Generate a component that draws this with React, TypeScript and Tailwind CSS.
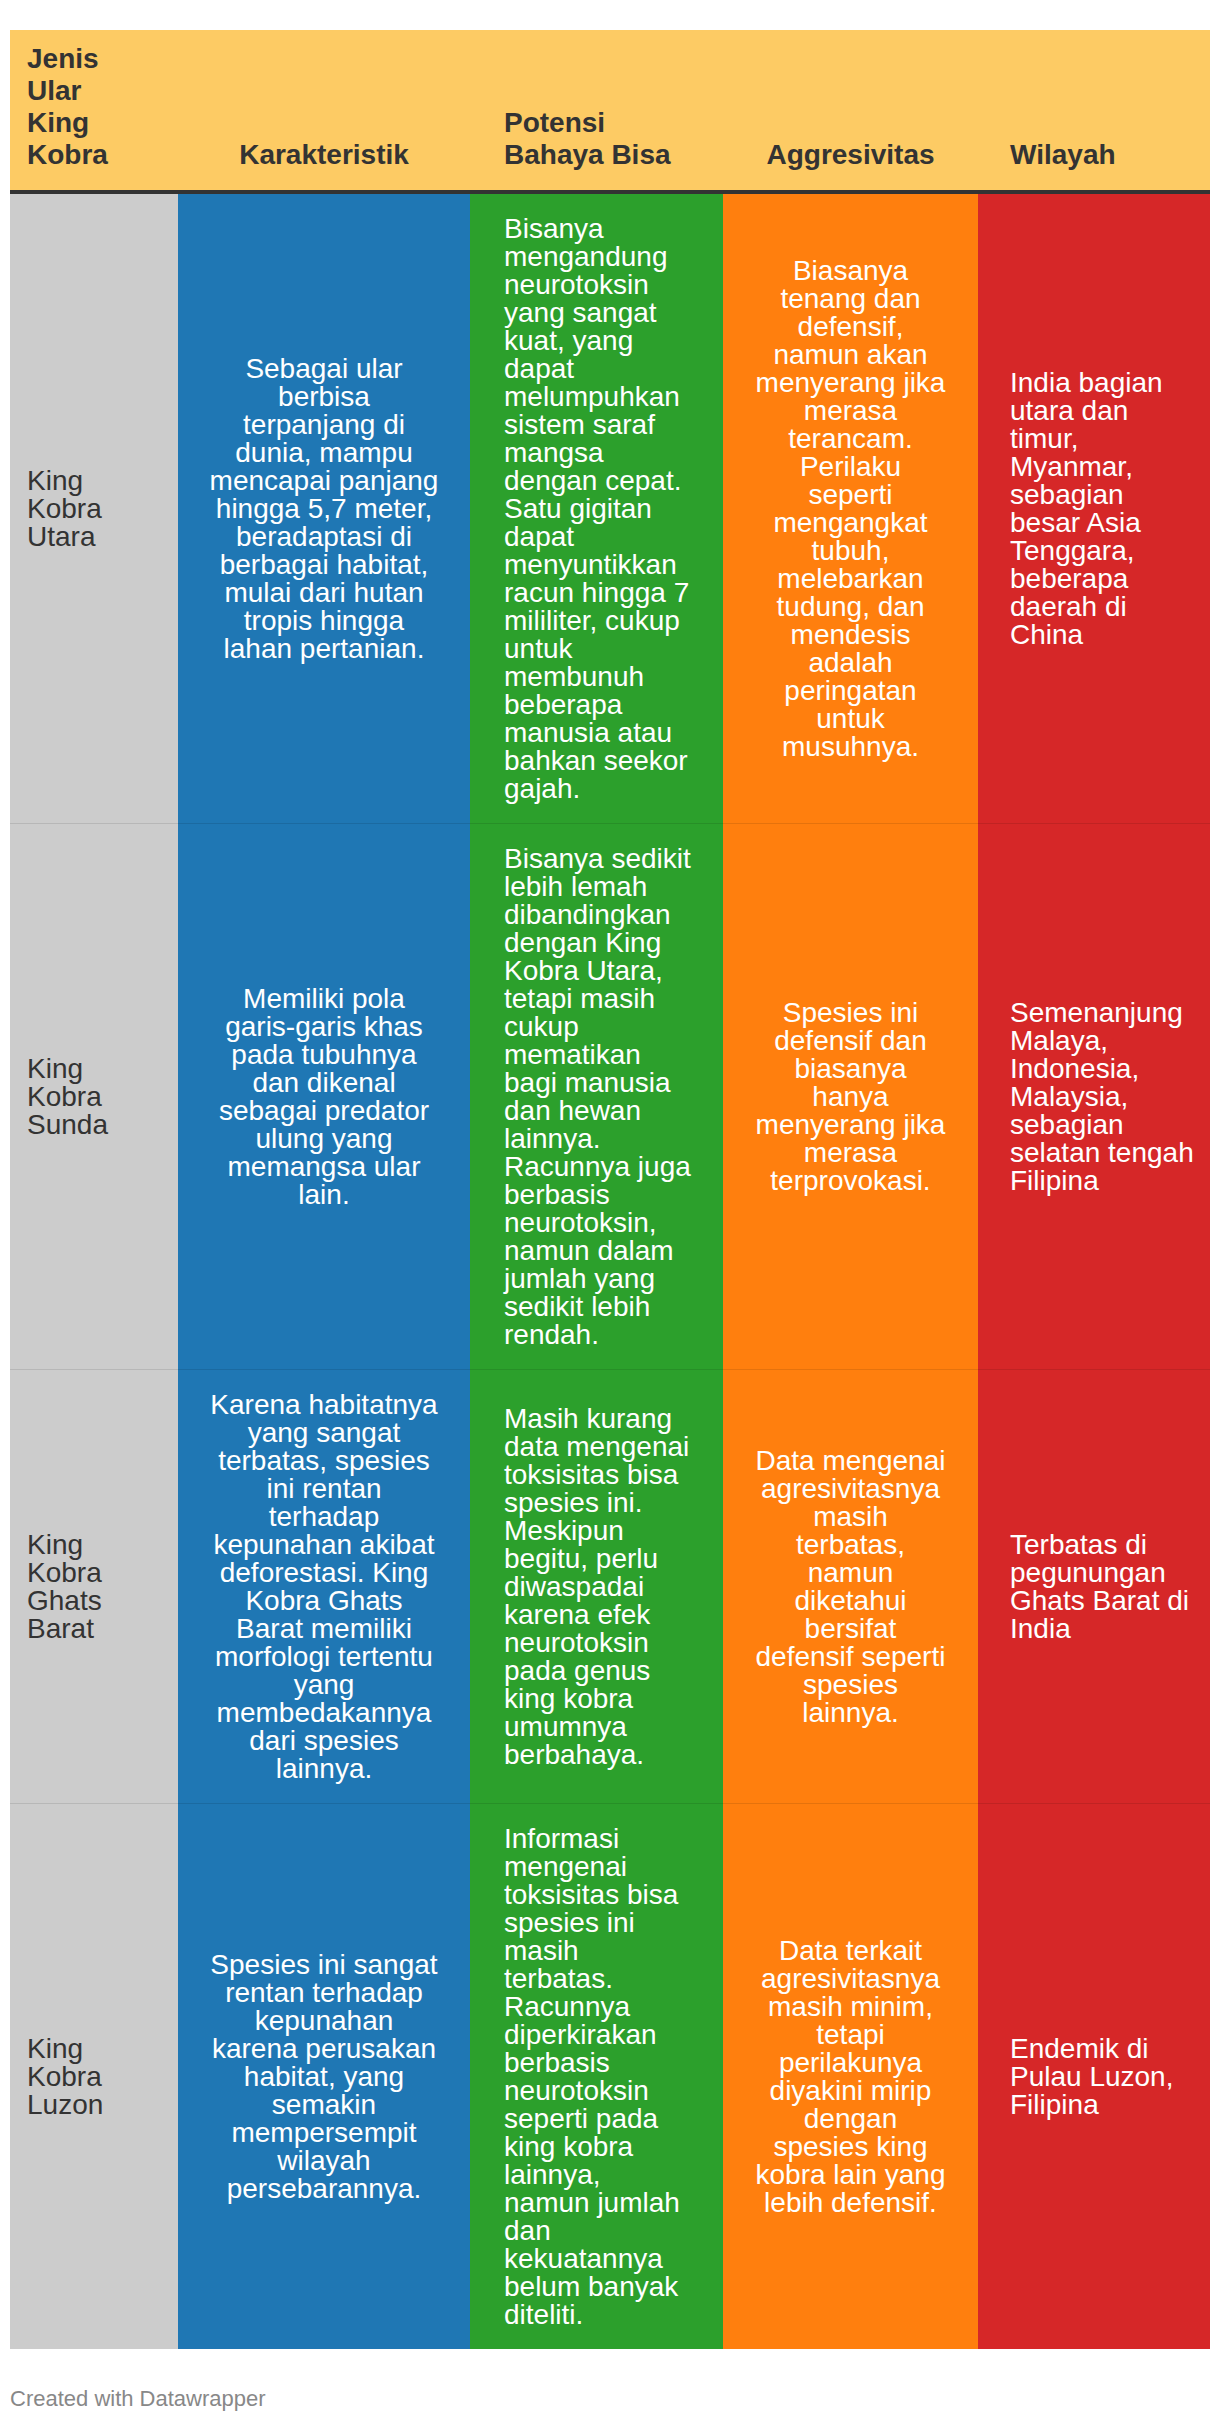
const cols = [
  { head: 'Jenis\nUlar\nKing\nKobra', cell: 'bg-[#cccccc] text-[#333333] pl-[17px] pr-[34px] text-left', headAlign: 'pl-[17px] pr-[34px] text-left' },
  { head: 'Karakteristik', cell: 'bg-[#1f77b4] text-white px-[31px] text-center', headAlign: 'px-[31px] text-center' },
  { head: 'Potensi\nBahaya Bisa', cell: 'bg-[#2ca02c] text-white pl-[34px] pr-[17px] text-left', headAlign: 'pl-[34px] pr-[17px] text-left' },
  { head: 'Aggresivitas', cell: 'bg-[#ff7f0e] text-white px-[32px] text-center', headAlign: 'px-[32px] text-center' },
  { head: 'Wilayah', cell: 'bg-[#d62728] text-white pl-[32px] pr-[12px] text-left', headAlign: 'pl-[32px] pr-[12px] text-left' },
]

// line breaks follow the original chart
const rows = [
  [
    'King\nKobra\nUtara',
    'Sebagai ular\nberbisa\nterpanjang di\ndunia, mampu\nmencapai panjang\nhingga 5,7 meter,\nberadaptasi di\nberbagai habitat,\nmulai dari hutan\ntropis hingga\nlahan pertanian.',
    'Bisanya\nmengandung\nneurotoksin\nyang sangat\nkuat, yang\ndapat\nmelumpuhkan\nsistem saraf\nmangsa\ndengan cepat.\nSatu gigitan\ndapat\nmenyuntikkan\nracun hingga 7\nmililiter, cukup\nuntuk\nmembunuh\nbeberapa\nmanusia atau\nbahkan seekor\ngajah.',
    'Biasanya\ntenang dan\ndefensif,\nnamun akan\nmenyerang jika\nmerasa\nterancam.\nPerilaku\nseperti\nmengangkat\ntubuh,\nmelebarkan\ntudung, dan\nmendesis\nadalah\nperingatan\nuntuk\nmusuhnya.',
    'India bagian\nutara dan\ntimur,\nMyanmar,\nsebagian\nbesar Asia\nTenggara,\nbeberapa\ndaerah di\nChina',
  ],
  [
    'King\nKobra\nSunda',
    'Memiliki pola\ngaris-garis khas\npada tubuhnya\ndan dikenal\nsebagai predator\nulung yang\nmemangsa ular\nlain.',
    'Bisanya sedikit\nlebih lemah\ndibandingkan\ndengan King\nKobra Utara,\ntetapi masih\ncukup\nmematikan\nbagi manusia\ndan hewan\nlainnya.\nRacunnya juga\nberbasis\nneurotoksin,\nnamun dalam\njumlah yang\nsedikit lebih\nrendah.',
    'Spesies ini\ndefensif dan\nbiasanya\nhanya\nmenyerang jika\nmerasa\nterprovokasi.',
    'Semenanjung\nMalaya,\nIndonesia,\nMalaysia,\nsebagian\nselatan tengah\nFilipina',
  ],
  [
    'King\nKobra\nGhats\nBarat',
    'Karena habitatnya\nyang sangat\nterbatas, spesies\nini rentan\nterhadap\nkepunahan akibat\ndeforestasi. King\nKobra Ghats\nBarat memiliki\nmorfologi tertentu\nyang\nmembedakannya\ndari spesies\nlainnya.',
    'Masih kurang\ndata mengenai\ntoksisitas bisa\nspesies ini.\nMeskipun\nbegitu, perlu\ndiwaspadai\nkarena efek\nneurotoksin\npada genus\nking kobra\numumnya\nberbahaya.',
    'Data mengenai\nagresivitasnya\nmasih\nterbatas,\nnamun\ndiketahui\nbersifat\ndefensif seperti\nspesies\nlainnya.',
    'Terbatas di\npegunungan\nGhats Barat di\nIndia',
  ],
  [
    'King\nKobra\nLuzon',
    'Spesies ini sangat\nrentan terhadap\nkepunahan\nkarena perusakan\nhabitat, yang\nsemakin\nmempersempit\nwilayah\npersebarannya.',
    'Informasi\nmengenai\ntoksisitas bisa\nspesies ini\nmasih\nterbatas.\nRacunnya\ndiperkirakan\nberbasis\nneurotoksin\nseperti pada\nking kobra\nlainnya,\nnamun jumlah\ndan\nkekuatannya\nbelum banyak\nditeliti.',
    'Data terkait\nagresivitasnya\nmasih minim,\ntetapi\nperilakunya\ndiyakini mirip\ndengan\nspesies king\nkobra lain yang\nlebih defensif.',
    'Endemik di\nPulau Luzon,\nFilipina',
  ],
]

const grid = 'grid grid-cols-[168px_292px_253px_255px_232px]'

export default function App() {
  return (
    <div className="min-h-[2420px] bg-white px-[10px] pt-[30px] font-['Liberation_Sans',Arial,sans-serif]">
      {/* header */}
      <div className={`${grid} border-b-4 border-[#333333] bg-[#fdcb64] text-[28px] font-bold leading-[32px] text-[#333333]`}>
        {cols.map((c) => (
          <div key={c.head} className={`flex h-[160px] items-end pb-[19px] ${c.headAlign}`}>
            <p className="w-full whitespace-pre">{c.head}</p>
          </div>
        ))}
      </div>

      {/* body */}
      {rows.map((row, i) => (
        <div key={row[0]} className={`${grid} text-[28px] leading-[28px]`}>
          {row.map((text, j) => (
            <div
              key={j}
              className={`flex items-center pt-[21px] pb-[20px] ${cols[j].cell} ${
                i < rows.length - 1 ? 'border-b border-black/10' : ''
              }`}
            >
              <p className="w-full whitespace-pre">{text}</p>
            </div>
          ))}
        </div>
      ))}

      <p className="mt-[37px] text-[22px] leading-[25px] text-[#888888]">Created with Datawrapper</p>
    </div>
  )
}
